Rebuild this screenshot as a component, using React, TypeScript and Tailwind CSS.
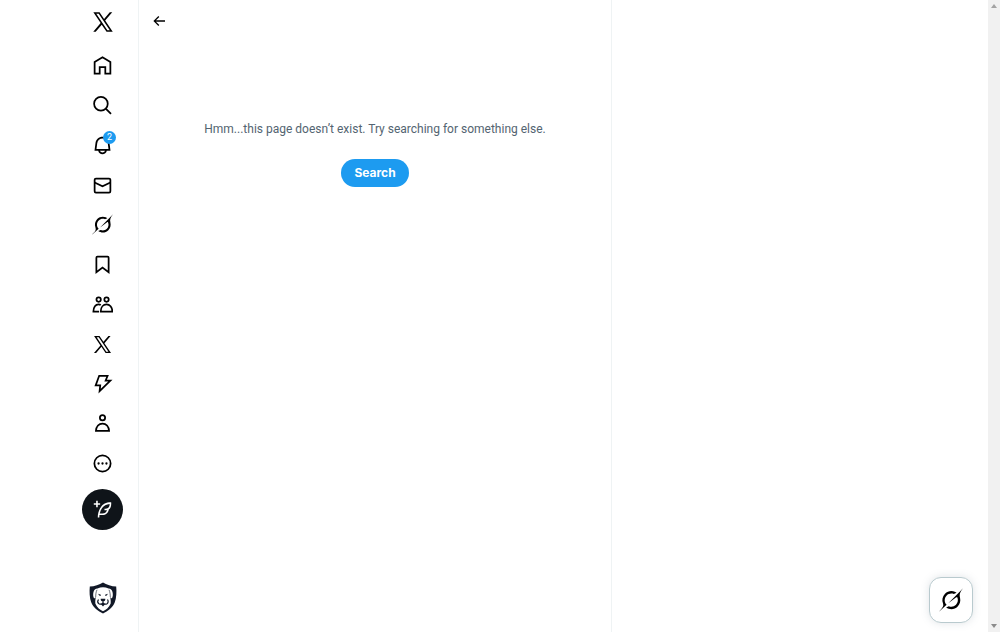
import React from 'react';

const Icon: React.FC<{ className?: string; children: React.ReactNode }> = ({ className = 'w-[21px] h-[21px]', children }) => (
  <svg viewBox="0 0 24 24" aria-hidden="true" fill="none" stroke="currentColor" strokeWidth="2" className={className}>
    {children}
  </svg>
);

const XLogo: React.FC<{ className?: string }> = ({ className }) => (
  <Icon className={className}>
    <path
      fill="currentColor"
      stroke="none"
      d="M21.742 21.75l-7.563-11.179 7.056-8.321h-2.456l-5.691 6.714-4.54-6.714H2.359l7.29 10.776L2.25 21.75h2.456l6.035-7.118 4.818 7.118h6.191-.008zM7.739 3.818L18.81 20.182h-2.447L5.29 3.818h2.447z"
    />
  </Icon>
);

const GrokLogo: React.FC<{ className?: string }> = ({ className = 'w-[21px] h-[21px]' }) => (
  <svg viewBox="0 0 33 32" aria-hidden="true" fill="currentColor" className={className}>
    <path d="M12.745 20.54l10.97-8.19c.539-.4 1.307-.244 1.564.38 1.349 3.288.746 7.241-1.938 9.955-2.683 2.714-6.417 3.31-9.83 1.954l-3.728 1.745c5.347 3.697 11.84 2.782 15.898-1.324 3.219-3.255 4.216-7.692 3.284-11.693l.008.009c-1.351-5.878.332-8.227 3.782-13.031L33 0l-4.54 4.59v-.014L12.743 20.544m-2.263 1.987c-3.837-3.707-3.175-9.446.1-12.755 2.42-2.449 6.388-3.448 9.852-1.979l3.72-1.737c-.67-.49-1.53-1.017-2.515-1.387-4.455-1.854-9.789-.931-13.41 2.728-3.483 3.523-4.579 8.94-2.697 13.561 1.405 3.454-.899 5.898-3.22 8.364C1.49 30.2.666 31.074 0 32l10.478-9.466" />
  </svg>
);

const navItems = [
  { label: 'Home', icon: <Icon><path d="M3 8l9-5.4L21 8v13.300h-5.800v-7.500H8.800v7.500H3z" /></Icon> },
  { label: 'Explore', icon: <Icon><circle cx="10.200" cy="10" r="7.800" /><path d="M15.700 15.500l6 6" /></Icon> },
  {
    label: 'Notifications',
    badge: 2,
    icon: (
      <Icon>
        <path fill="currentColor" stroke="none" d="M19.993 9.042C19.48 5.017 16.054 2 11.996 2s-7.49 3.021-7.999 7.051L2.866 18H7.1c.463 2.282 2.481 4 4.9 4s4.437-1.718 4.9-4h4.236l-1.143-8.958zM12 20c-1.306 0-2.417-.835-2.829-2h5.658c-.412 1.165-1.523 2-2.829 2zm-6.866-4l.847-6.698C6.364 6.272 8.941 4 11.996 4s5.627 2.268 6.013 5.295L18.864 16H5.134z" />
      </Icon>
    ),
  },
  {
    label: 'Messages',
    icon: <Icon><rect x="3" y="4" width="18" height="16" rx="1.500" /><path d="M3 8.500l9 4.500 9-4.500" /></Icon>,
  },
  { label: 'Grok', icon: <GrokLogo /> },
  { label: 'Bookmarks', icon: <Icon><path d="M5 4.200Q5 3 6.200 3h11.600Q19 3 19 4.200v16.600l-7-5.200-7 5.200z" /></Icon> },
  {
    label: 'Communities',
    icon: (
      <Icon>
        <circle cx="7.600" cy="6.400" r="2.500" />
        <circle cx="16.600" cy="6.400" r="2.500" />
        <path d="M8 20H1.600c0-5.200 2.600-8.200 5.800-8.200 1 0 1.900.2 2.600.7M10 20h13.200c0-5.200-3-8.200-6.600-8.200s-6.600 3-6.600 8.200z" />
      </Icon>
    ),
  },
  { label: 'Premium', icon: <XLogo /> },
  { label: 'Verified Orgs', icon: <Icon><path d="M8.200 3.200h9.600l-2.200 5.400h5.400L8.700 20.700l.7-6.500H4.200z" /></Icon> },
  { label: 'Profile', icon: <Icon><circle cx="12" cy="5.500" r="3" /><path d="M4.500 20.400h15c-.3-5-3.300-8.400-7.500-8.400s-7.200 3.400-7.500 8.400z" /></Icon> },
  {
    label: 'More',
    icon: (
      <Icon>
        <circle cx="12" cy="12" r="9.300" />
        <g fill="currentColor" stroke="none">
          <circle cx="7.500" cy="12" r="1.300" />
          <circle cx="12" cy="12" r="1.300" />
          <circle cx="16.500" cy="12" r="1.300" />
        </g>
      </Icon>
    ),
  },
];

const Avatar = () => (
  <svg viewBox="0 0 28 32" aria-hidden="true" className="w-7 h-8">
    <path fill="#111827" d="M14 .5C10.500 2.800 5.500 4.300.8 4.600c-.5 5-.3 11.400 1.400 15.700C4.300 25.500 9 29.300 14 31.500c5-2.200 9.700-6 11.800-11.200 1.700-4.300 1.900-10.700 1.400-15.700C22.500 4.300 17.500 2.800 14 .5z" />
    <path fill="#fff" d="M8.500 6.500c3.500-1.600 7.500-1.600 11 0 2.200.1 3.400 1.500 4 3.500.6 2.400.5 4.900-.8 6.500l-1.400-1.500c.2 2.500.7 4.500.3 6.800C20 25.500 17 28 14 29.300 11 28 8 25.500 6.400 21.800c-.4-2.300.1-4.300.3-6.800l-1.400 1.500c-1.300-1.600-1.400-4.100-.8-6.500.6-2 1.800-3.400 4-3.500z" />
    <path fill="none" stroke="#111827" strokeWidth=".6" d="M8 7.800c-1 2-1.300 4.700-1.300 7.200M20 7.800c1 2 1.300 4.700 1.300 7.200" />
    <path fill="#111827" d="M9.300 11.800l2.600.9-.4 1.200c-1 .1-1.800-.6-2.200-2.100zM18.700 11.800l-2.600.9.4 1.200c1 .1 1.800-.6 2.200-2.100zM11.700 16.800h4.600c.3 1.500-.8 2.800-2.300 2.900-1.500-.1-2.600-1.400-2.300-2.900zM11.800 22h4.400L14 24.600z" />
    <path fill="none" stroke="#111827" strokeWidth="1.200" d="M14 19.500v1.500M9.500 17.500c-1 1.500-.8 3.400.4 4.200 1.600.8 3.300.3 4.100-.9.8 1.200 2.500 1.700 4.100.9 1.200-.8 1.400-2.700.4-4.200" />
  </svg>
);

const Sidebar = () => (
  <header className="w-[138px] shrink-0 flex flex-col items-end">
    <div className="w-[71px] flex-1 flex flex-col items-center">
      <a href="#" aria-label="X" className="h-11 flex items-center">
        <XLogo className="w-6 h-6" />
      </a>
      <nav aria-label="Primary" className="mt-0.5 h-[437px] flex flex-col">
        {navItems.map(item => (
          <a key={item.label} href="#" aria-label={item.label} className="flex-1 flex items-center">
            <span className="relative">
              {item.icon}
              {item.badge && (
                <span className="absolute -top-1 -right-[3px] w-[13px] h-[13px] rounded-full bg-[#1d9bf0] text-white text-[9px] leading-[13px] text-center">
                  {item.badge}
                </span>
              )}
            </span>
          </a>
        ))}
      </nav>
      <button aria-label="Post" className="mt-1.5 w-[41px] h-[41px] rounded-full bg-[#0f1419] text-white flex items-center justify-center">
        <Icon className="w-[19px] h-[19px]">
          <path fill="currentColor" stroke="none" d="M23 3c-6.62-.1-10.38 2.421-13.05 6.03C7.29 12.61 6 17.331 6 22h2c0-1.007.07-2.012.19-3H12c4.1 0 7.48-3.082 7.94-7.054C22.79 10.147 23.17 6.359 23 3zm-7 8h-1.5v2H16c.63-.016 1.2-.08 1.72-.188C16.95 15.24 14.68 17 12 17H8.55c.57-2.512 1.57-4.851 3-6.78 2.16-2.912 5.29-4.911 9.45-5.187C20.95 8.079 19.9 11 16 11zM4 9V6H1V4h3V1h2v3h3v2H6v3H4z" />
        </Icon>
      </button>
      <button aria-label="Account menu" className="mt-auto mb-[18px]">
        <Avatar />
      </button>
    </div>
  </header>
);

const Scrollbar = () => (
  <div className="w-3 shrink-0 bg-[#f1f1f1] flex flex-col justify-between items-center py-1">
    <svg viewBox="0 0 6 4" className="w-1.5 h-1" fill="#a3a3a3"><path d="M0 4l3-4 3 4z" /></svg>
    <svg viewBox="0 0 6 4" className="w-1.5 h-1" fill="#8b8b8b"><path d="M0 0l3 4 3-4z" /></svg>
  </div>
);

export default function App() {
  return (
    <div className="min-h-screen flex bg-white text-black font-['Roboto','Liberation_Sans',sans-serif]">
      <Sidebar />
      <main className="w-[474px] border-x border-[#eff3f4]">
        <div className="h-[42px] px-3 flex items-center">
          <button aria-label="Back">
            <Icon className="w-4 h-4">
              <path fill="currentColor" stroke="none" d="M7.414 13l5.043 5.04-1.414 1.42L3.586 12l7.457-7.46 1.414 1.42L7.414 11H21v2H7.414z" />
            </Icon>
          </button>
        </div>
        <div className="pt-[78px] flex flex-col items-center gap-[21px]">
          <p className="text-xs/[18px] text-[#536471]">Hmm...this page doesn’t exist. Try searching for something else.</p>
          <a href="#" className="h-7 px-[13px] rounded-full bg-[#1d9bf0] text-white text-xs font-bold font-['Inter','Liberation_Sans',sans-serif] flex items-center">
            Search
          </a>
        </div>
      </main>
      <aside className="flex-1" />
      <Scrollbar />
      <button
        aria-label="Open Grok"
        className="fixed right-[27px] bottom-[9px] w-11 h-[46px] rounded-xl border border-[#b9cace] bg-white text-black shadow-[0_0_8px_rgba(101,119,134,0.2)] flex items-center justify-center"
      >
        <GrokLogo className="w-6 h-6" />
      </button>
    </div>
  );
}
